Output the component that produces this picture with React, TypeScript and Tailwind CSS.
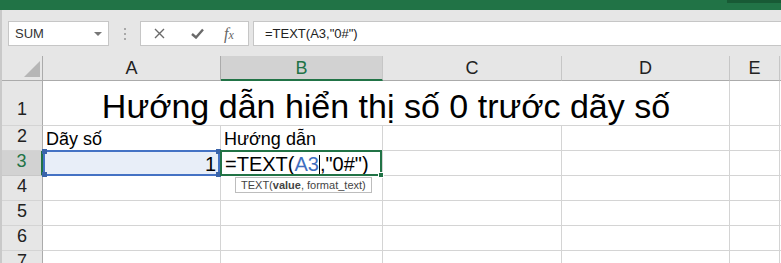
import React from 'react';

const FONT = "font-['Liberation_Sans',Arial,sans-serif]";

const FormulaBar = () => (
  <div className="flex h-[46px] items-start bg-[#e6e6e6] pl-[6px] pt-[11px]">
    <div className="flex h-[25px] w-[101px] items-center justify-between border border-[#c6c6c6] bg-white pl-[6px] pr-[6px] text-[13px] text-[#333]">
      <span>SUM</span>
      <span className="h-0 w-0 border-x-[4px] border-t-[4px] border-x-transparent border-t-[#777]" />
    </div>
    <div className="flex w-[31px] flex-col items-center gap-[3px] pt-[7px]">
      <span className="h-[2px] w-[2px] bg-[#a8a8a8]" />
      <span className="h-[2px] w-[2px] bg-[#a8a8a8]" />
      <span className="h-[2px] w-[2px] bg-[#a8a8a8]" />
    </div>
    <div className="flex h-[25px] w-[109px] items-center border border-[#c6c6c6] bg-white">
      <svg className="ml-[13px]" width="11" height="11" viewBox="0 0 11 11">
        <path d="M1 1 L10 10 M10 1 L1 10" stroke="#6a6a6a" strokeWidth="1.4" fill="none" />
      </svg>
      <svg className="ml-[26px]" width="13" height="11" viewBox="0 0 13 11">
        <path d="M1 6 L5 9.5 L12 1.5" stroke="#6a6a6a" strokeWidth="2.4" fill="none" />
      </svg>
      <span className="ml-[20px] font-['Liberation_Serif',serif] text-[16px] italic leading-none text-[#666]">
        f<span className="text-[12px]">x</span>
      </span>
    </div>
    <div className="ml-[4px] flex h-[25px] flex-1 items-center border border-r-0 border-[#c6c6c6] bg-white pl-[11px] text-[13px] text-[#222]">
      =TEXT(A3,"0#")
    </div>
  </div>
);

const HeaderRow = () => (
  <div className="flex h-[25px] bg-[#e6e6e6] text-[18px] leading-none text-[#222]">
    <div className="relative w-[41px] border-b border-r border-[#ababab]">
      <svg className="absolute bottom-[3px] right-[2px]" width="16" height="16" viewBox="0 0 16 16">
        <polygon points="16,0 16,16 0,16" fill="#b6b6b6" />
      </svg>
    </div>
    <div className="flex w-[178px] items-end justify-center border-b border-r border-[#ababab] pb-[3px]">A</div>
    <div className="flex w-[162px] items-end justify-center border-b-2 border-r border-b-[#217346] border-r-[#c6c6c6] bg-[#d2d2d2] pb-[2px] text-[#217346]">B</div>
    <div className="flex w-[179px] items-end justify-center border-b border-r border-b-[#ababab] border-r-[#c6c6c6] pb-[3px]">C</div>
    <div className="flex w-[168px] items-end justify-center border-b border-r border-b-[#ababab] border-r-[#c6c6c6] pb-[3px]">D</div>
    <div className="flex w-[50px] items-end justify-center border-b border-r border-b-[#ababab] border-r-[#c6c6c6] pb-[3px]">E</div>
    <div className="flex-1 border-b border-[#ababab]" />
  </div>
);

const RowHead = ({ n, active, pad }: { n: number; active?: boolean; pad: string }) => (
  <div
    className={
      active
        ? `flex w-[41px] items-end justify-center border-b border-r-2 border-b-[#c8c8c8] border-r-[#217346] bg-[#d2d2d2] text-[18px] leading-none text-[#217346] ${pad}`
        : `flex w-[41px] items-end justify-center border-b border-r border-b-[#d4d4d4] border-r-[#ababab] bg-[#e6e6e6] text-[18px] leading-none text-[#222] ${pad}`
    }
  >
    {n}
  </div>
);

const EmptyRow = ({ n }: { n: number }) => (
  <div className="flex h-[25px]">
    <RowHead n={n} pad="pb-[5px]" />
    <div className="w-[178px] border-b border-r border-[#d4d4d4]" />
    <div className="w-[162px] border-b border-r border-[#d4d4d4]" />
    <div className="w-[179px] border-b border-r border-[#d4d4d4]" />
    <div className="w-[168px] border-b border-r border-[#d4d4d4]" />
    <div className="w-[50px] border-b border-r border-[#d4d4d4]" />
    <div className="flex-1 border-b border-[#d4d4d4]" />
  </div>
);

const Sheet = () => (
  <div className="text-black">
    <HeaderRow />

    <div className="flex h-[45px]">
      <RowHead n={1} pad="pb-[7px]" />
      <div className="flex w-[687px] items-end justify-center border-b border-r border-[#d4d4d4] pb-[2px] text-[34px] leading-none">
        Hướng dẫn hiển thị số 0 trước dãy số
      </div>
      <div className="w-[50px] border-b border-r border-[#d4d4d4]" />
      <div className="flex-1 border-b border-[#d4d4d4]" />
    </div>

    <div className="flex h-[25px] text-[18px] leading-none">
      <RowHead n={2} pad="pb-[5px]" />
      <div className="flex w-[178px] items-end border-b border-r border-[#d4d4d4] pb-[2px] pl-[3px]">Dãy số</div>
      <div className="flex w-[162px] items-end border-b border-r border-[#d4d4d4] pb-[2px] pl-[3px]">Hướng dẫn</div>
      <div className="w-[179px] border-b border-r border-[#d4d4d4]" />
      <div className="w-[168px] border-b border-r border-[#d4d4d4]" />
      <div className="w-[50px] border-b border-r border-[#d4d4d4]" />
      <div className="flex-1 border-b border-[#d4d4d4]" />
    </div>

    <div className="flex h-[25px] text-[20px] leading-none">
      <RowHead n={3} active pad="pb-[5px]" />
      <div className="relative flex w-[178px] items-end justify-end border-b border-r border-[#d4d4d4] bg-[#e8eef8] pb-[1px] pr-[4px]">
        1
        <div className="absolute -bottom-px -top-px left-0 right-0 z-10 border-2 border-[#4472c4]">
          <span className="absolute -left-[3px] -top-[3px] h-[5px] w-[5px] bg-[#3a64aa]" />
          <span className="absolute -right-[3px] -top-[3px] h-[5px] w-[5px] bg-[#3a64aa]" />
          <span className="absolute -bottom-[3px] -left-[3px] h-[5px] w-[5px] bg-[#3a64aa]" />
          <span className="absolute -bottom-[3px] -right-[3px] h-[5px] w-[5px] bg-[#3a64aa]" />
        </div>
      </div>
      <div className="relative flex w-[162px] items-end border-b border-r border-[#d4d4d4] pb-[1px] pl-[4px]">
        <span>=TEXT(</span>
        <span className="text-[#3f6fc0]">A3</span>
        <span className="mb-[-1px] h-[20px] w-px bg-black" />
        <span>,"0#")</span>
        <div className="absolute -bottom-px -left-px -top-px right-0 z-10 border-2 border-[#217346]">
          <span className="absolute -bottom-[4px] -right-[4px] h-[6px] w-[6px] border border-white bg-[#217346]" />
        </div>
        <div className="absolute left-[14px] top-[26px] z-20 flex h-[16px] items-center whitespace-nowrap border border-[#bdbdbd] bg-white px-[5px] text-[11px] leading-none text-[#444]">
          TEXT(<b>value</b>, format_text)
        </div>
      </div>
      <div className="w-[179px] border-b border-r border-[#d4d4d4]" />
      <div className="w-[168px] border-b border-r border-[#d4d4d4]" />
      <div className="w-[50px] border-b border-r border-[#d4d4d4]" />
      <div className="flex-1 border-b border-[#d4d4d4]" />
    </div>

    <EmptyRow n={4} />
    <EmptyRow n={5} />
    <EmptyRow n={6} />
    <EmptyRow n={7} />
  </div>
);

export default function App() {
  return (
    <div className={`h-[263px] w-[781px] overflow-hidden bg-white ${FONT}`}>
      <div className="flex h-[10px] justify-end bg-[#217346]">
        <div className="h-[3px] w-[54px] bg-[#185a35]" />
      </div>
      <div className="border-l-2 border-[#c9c9c9]">
        <FormulaBar />
        <Sheet />
      </div>
    </div>
  );
}
